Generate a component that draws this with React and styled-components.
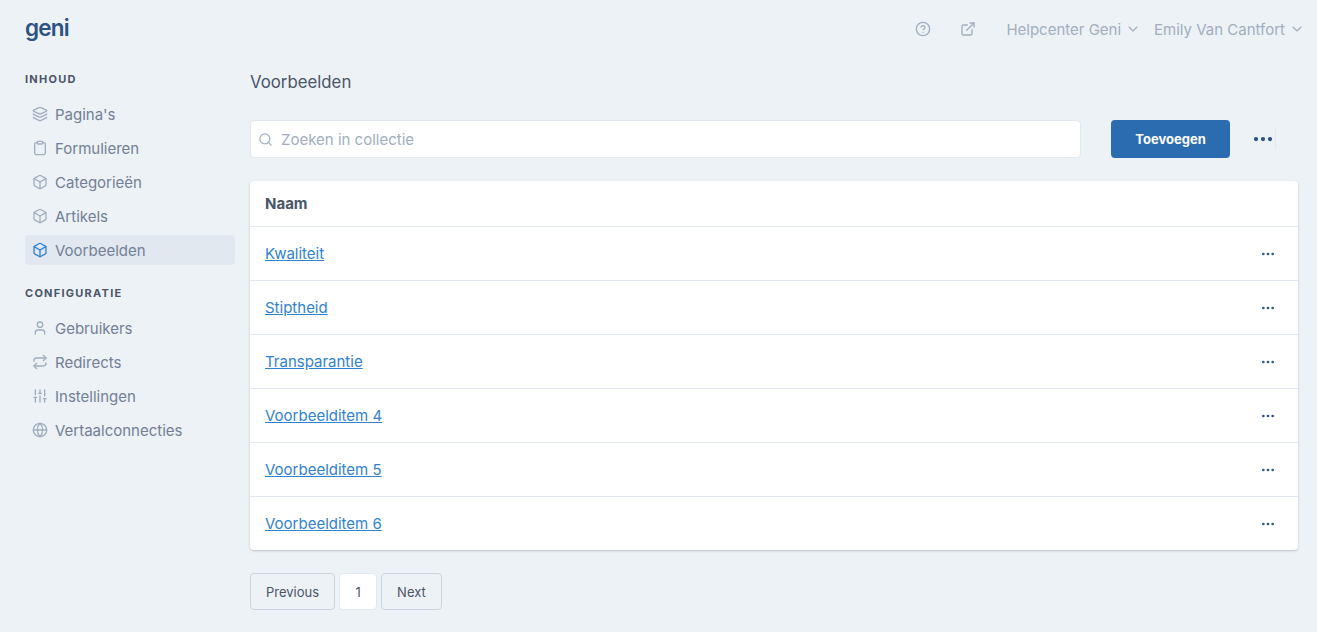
import React from "react";
import styled, { createGlobalStyle } from "styled-components";
import { Layers, Clipboard, Box, User, Repeat, SlidersVertical, Globe, CircleHelp, ExternalLink, ChevronDown, Search, Ellipsis } from "lucide-react";

const Global = createGlobalStyle`
  html, body { margin: 0; padding: 0; background: #edf2f7; }
  body { font-family: Inter, "Liberation Sans", sans-serif; color: #4a5568; height: 632px; overflow: hidden; }
  * { box-sizing: border-box; }
`;

const Page = styled.div`
  display: flex;
  flex-direction: column;
  width: 1317px;
  height: 632px;
  background: #edf2f7;
`;
const Header = styled.header`
  display: flex;
  align-items: center;
  justify-content: space-between;
  height: 60px;
  padding: 0 12px 2px 25px;
`;
const Logo = styled.div`
  font-family: Inter, sans-serif;
  font-size: 22.5px;
  font-weight: 600;
  letter-spacing: -0.8px;
  line-height: 30px;
  color: #2c5282;
  margin-top: -2px;
`;
const HeaderRight = styled.div`
  display: flex;
  align-items: center;
  font-size: 15px;
  color: #a0aec0;
`;
const HeaderIcon = styled.span`
  display: flex;
  margin-right: ${p => p.$mr}px;
  color: #a0aec0;
`;
const Menu = styled.span`
  display: flex;
  align-items: center;
  gap: 4px;
  margin-left: ${p => p.$ml || 0}px;
`;
const Body = styled.div`
  display: flex;
  flex: 1;
`;
const Side = styled.nav`
  width: 250px;
  padding: 12px 15px 0 25px;
`;
const SectionTitle = styled.div`
  font-size: 11px;
  font-weight: 700;
  letter-spacing: 1.25px;
  line-height: 14px;
  color: #4a5568;
  margin: ${p => p.$mt}px 0 13px;
`;
const NavList = styled.div`
  display: flex;
  flex-direction: column;
  gap: 4px;
`;
const NavItem = styled.div`
  display: flex;
  align-items: center;
  gap: 7px;
  height: 30px;
  padding-left: 7px;
  border-radius: 4px;
  font-size: 15px;
  color: #718096;
  background: ${p => (p.$active ? "#e2e8f0" : "transparent")};
  svg { color: ${p => (p.$active ? "#3182ce" : "#a0aec0")}; flex: none; }
`;
const Main = styled.main`
  flex: 1;
  padding: 10px 19px 0 0;
`;
const Title = styled.h1`
  margin: 0 0 26px;
  font-size: 16.8px;
  font-weight: 400;
  line-height: 24px;
  color: #4a5568;
`;
const Toolbar = styled.div`
  display: flex;
  align-items: center;
  margin-bottom: 23px;
`;
const SearchBox = styled.div`
  display: flex;
  align-items: center;
  gap: 8px;
  width: 831px;
  height: 38px;
  padding-left: 7px;
  background: #fff;
  border: 1px solid #e2e8f0;
  border-radius: 4px;
  font-size: 15px;
  color: #a0aec0;
`;
const AddButton = styled.button`
  width: 119px;
  height: 38px;
  margin-left: 30px;
  border: 0;
  border-radius: 4px;
  background: #2b6cb0;
  color: #fff;
  font: 700 13px Inter, sans-serif;
`;
const DotsWrap = styled.div`
  display: flex;
  align-items: center;
  height: 22px;
  margin-left: 21px;
  border-right: 1px solid #e2e8f0;
  color: #2c5282;
`;
const Card = styled.section`
  background: #fff;
  border-radius: 4px;
  box-shadow: 0 1px 3px rgba(0,0,0,.12), 0 1px 2px rgba(0,0,0,.08);
`;
const HeadRow = styled.div`
  height: 46px;
  padding-left: 15px;
  display: flex;
  align-items: center;
  font-size: 15px;
  font-weight: 700;
  color: #4a5568;
  border-bottom: 1px solid #e2e8f0;
`;
const Row = styled.div`
  display: flex;
  align-items: center;
  justify-content: space-between;
  height: ${p => (p.$last ? 53 : 54)}px;
  padding: 0 22px 0 15px;
  border-bottom: ${p => (p.$last ? "0" : "1px solid #e2e8f0")};
  svg { color: #2c5282; }
`;
const RowLink = styled.a`
  font-size: 15px;
  color: #3182ce;
  text-decoration: underline;
`;
const Pager = styled.div`
  display: flex;
  gap: 4px;
  margin-top: 23px;
`;
const PageBtn = styled.div`
  display: flex;
  align-items: center;
  justify-content: center;
  height: 37px;
  min-width: 38px;
  padding: 0 15px;
  font-size: 13px;
  color: #4a5568;
  border: 1px solid ${p => (p.$current ? "#e2e8f0" : "#cbd5e0")};
  background: ${p => (p.$current ? "#fff" : "transparent")};
  border-radius: 4px;
`;

const content = [["Pagina's", Layers], ["Formulieren", Clipboard], ["Categorieën", Box], ["Artikels", Box], ["Voorbeelden", Box, true]];
const config = [["Gebruikers", User], ["Redirects", Repeat], ["Instellingen", SlidersVertical], ["Vertaalconnecties", Globe]];
const rows = ["Kwaliteit", "Stiptheid", "Transparantie", "Voorbeelditem 4", "Voorbeelditem 5", "Voorbeelditem 6"];

const Nav = ({ items }) => (
  <NavList>
    {items.map(([label, Icon, active]) => (
      <NavItem key={label} $active={active}>
        <Icon size={16} strokeWidth={2} />
        {label}
      </NavItem>
    ))}
  </NavList>
);

export default function App() {
  return (
    <Page>
      <Global />
      <Header>
        <Logo>geni</Logo>
        <HeaderRight>
          <HeaderIcon $mr={29}><CircleHelp size={16} strokeWidth={2} /></HeaderIcon>
          <HeaderIcon $mr={30}><ExternalLink size={16} strokeWidth={2} /></HeaderIcon>
          <Menu>Helpcenter Geni <ChevronDown size={16} strokeWidth={1.75} /></Menu>
          <Menu $ml={13}>Emily Van Cantfort <ChevronDown size={16} strokeWidth={1.75} /></Menu>
        </HeaderRight>
      </Header>
      <Body>
        <Side>
          <SectionTitle $mt={0}>INHOUD</SectionTitle>
          <Nav items={content} />
          <SectionTitle $mt={21}>CONFIGURATIE</SectionTitle>
          <Nav items={config} />
        </Side>
        <Main>
          <Title>Voorbeelden</Title>
          <Toolbar>
            <SearchBox><Search size={15} strokeWidth={2} />Zoeken in collectie</SearchBox>
            <AddButton>Toevoegen</AddButton>
            <DotsWrap><Ellipsis size={24} strokeWidth={2.25} /></DotsWrap>
          </Toolbar>
          <Card>
            <HeadRow>Naam</HeadRow>
            {rows.map((r, i) => (
              <Row key={r} $last={i === rows.length - 1}>
                <RowLink>{r}</RowLink>
                <Ellipsis size={16} strokeWidth={2} />
              </Row>
            ))}
          </Card>
          <Pager>
            <PageBtn>Previous</PageBtn>
            <PageBtn $current>1</PageBtn>
            <PageBtn>Next</PageBtn>
          </Pager>
        </Main>
      </Body>
    </Page>
  );
}
